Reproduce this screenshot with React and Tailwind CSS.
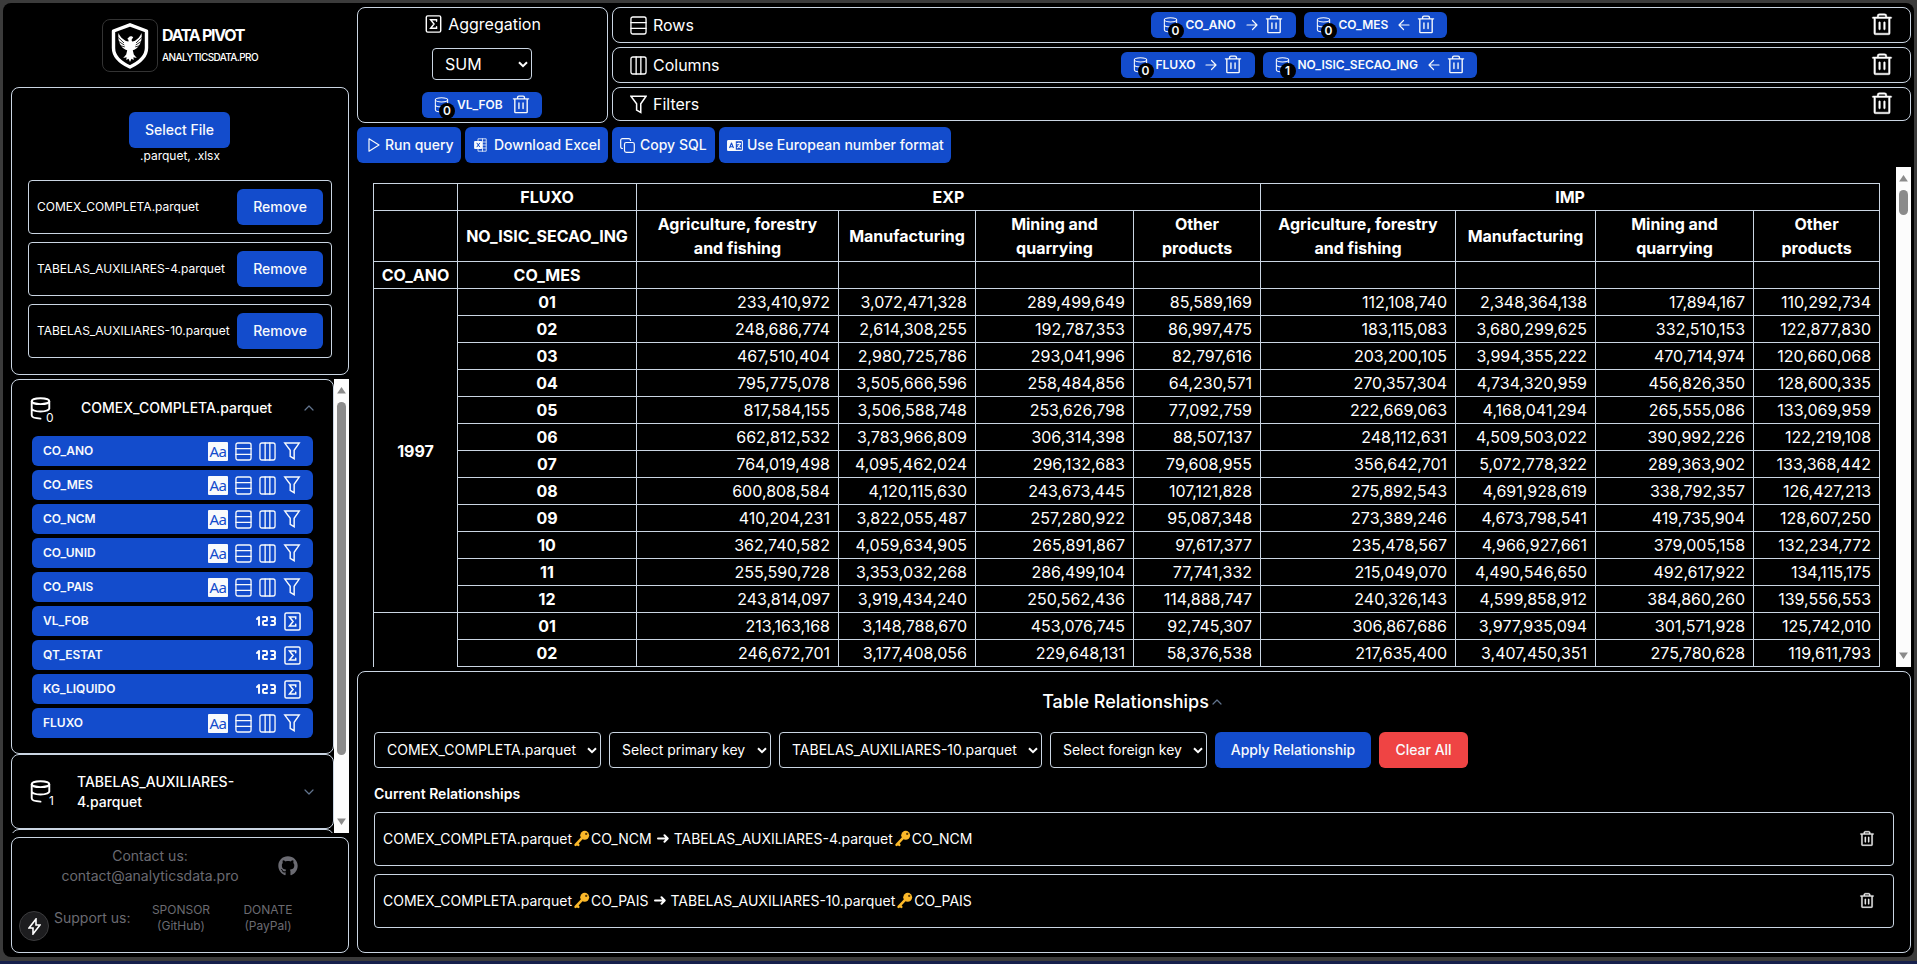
import { PiTrash } from "react-icons/pi";
import { TbNumber123 } from "react-icons/tb";
import { FaGithub } from "react-icons/fa";

const FILES = ["COMEX_COMPLETA.parquet", "TABELAS_AUXILIARES-4.parquet", "TABELAS_AUXILIARES-10.parquet"];

const FIELDS = [
  ["CO_ANO", "text"],
  ["CO_MES", "text"],
  ["CO_NCM", "text"],
  ["CO_UNID", "text"],
  ["CO_PAIS", "text"],
  ["VL_FOB", "number"],
  ["QT_ESTAT", "number"],
  ["KG_LIQUIDO", "number"],
  ["FLUXO", "text"],
];

const SECTIONS = ["Agriculture, forestry and fishing", "Manufacturing", "Mining and quarrying", "Other products"];

const DATA = [
  ["01", "233,410,972", "3,072,471,328", "289,499,649", "85,589,169", "112,108,740", "2,348,364,138", "17,894,167", "110,292,734"],
  ["02", "248,686,774", "2,614,308,255", "192,787,353", "86,997,475", "183,115,083", "3,680,299,625", "332,510,153", "122,877,830"],
  ["03", "467,510,404", "2,980,725,786", "293,041,996", "82,797,616", "203,200,105", "3,994,355,222", "470,714,974", "120,660,068"],
  ["04", "795,775,078", "3,505,666,596", "258,484,856", "64,230,571", "270,357,304", "4,734,320,959", "456,826,350", "128,600,335"],
  ["05", "817,584,155", "3,506,588,748", "253,626,798", "77,092,759", "222,669,063", "4,168,041,294", "265,555,086", "133,069,959"],
  ["06", "662,812,532", "3,783,966,809", "306,314,398", "88,507,137", "248,112,631", "4,509,503,022", "390,992,226", "122,219,108"],
  ["07", "764,019,498", "4,095,462,024", "296,132,683", "79,608,955", "356,642,701", "5,072,778,322", "289,363,902", "133,368,442"],
  ["08", "600,808,584", "4,120,115,630", "243,673,445", "107,121,828", "275,892,543", "4,691,928,619", "338,792,357", "126,427,213"],
  ["09", "410,204,231", "3,822,055,487", "257,280,922", "95,087,348", "273,389,246", "4,673,798,541", "419,735,904", "128,607,250"],
  ["10", "362,740,582", "4,059,634,905", "265,891,867", "97,617,377", "235,478,567", "4,966,927,661", "379,005,158", "132,234,772"],
  ["11", "255,590,728", "3,353,032,268", "286,499,104", "77,741,332", "215,049,070", "4,490,546,650", "492,617,922", "134,115,175"],
  ["12", "243,814,097", "3,919,434,240", "250,562,436", "114,888,747", "240,326,143", "4,599,858,912", "384,860,260", "139,556,553"],
  ["01", "213,163,168", "3,148,788,670", "453,076,745", "92,745,307", "306,867,686", "3,977,935,094", "301,571,928", "125,742,010"],
  ["02", "246,672,701", "3,177,408,056", "229,648,131", "58,376,538", "217,635,400", "3,407,450,351", "275,780,628", "119,611,793"],
];

function Stroke({ children, className, width = 1.5, box = "0 0 20 20" }) {
  return (
    <svg viewBox={box} className={className} fill="none" stroke="currentColor" strokeWidth={width} strokeLinejoin="round" strokeLinecap="round">
      {children}
    </svg>
  );
}

const RowsIcon = ({ className }) => (
  <Stroke className={className} width={1.4} box="0 0 18 20">
    <rect x="1" y="1" width="16" height="18" rx="2" />
    <path d="M1 7h16M1 13h16" />
  </Stroke>
);

const ColumnsIcon = ({ className }) => (
  <Stroke className={className} width={1.4} box="0 0 18 20">
    <rect x="1" y="1" width="16" height="18" rx="2" />
    <path d="M6.500 1v18M11.500 1v18" />
  </Stroke>
);

const FunnelIcon = ({ className }) => (
  <Stroke className={className} width={1.600} box="0 0 18 20">
    <path strokeLinejoin="miter" d="M1 1.200h16l-5.600 8v9.300L7 16V9.200z" />
  </Stroke>
);

const SigmaIcon = ({ className }) => (
  <Stroke className={className} width={1.600} box="0 0 18 20">
    <rect x="1" y="1" width="16" height="18" rx="1.600" />
    <path strokeLinejoin="miter" d="M12.400 7V5.300H5.800L9.600 10l-3.800 4.700h6.600V13" />
  </Stroke>
);

const DatabaseIcon = ({ className, width = 2 }) => (
  <Stroke className={className} width={width} box="0 0 22 24">
    <ellipse cx="11" cy="4.300" rx="9.200" ry="3.100" />
    <path d="M1.800 4.300v14.900c0 1.900 3.700 3.300 9.200 3.400M20.200 4.300v8M1.800 11.800c0 1.900 4 3.300 9.200 3.300s9.200-1.400 9.200-3.300" />
  </Stroke>
);

const LetterIcon = () => (
  <span className="flex h-[19px] w-5 items-center justify-center rounded-[1px] bg-[#f8fafc] font-['Noto_Sans',sans-serif] text-[15px] leading-none tracking-[-0.5px] text-[#134ccc]">Aa</span>
);

const Caret = ({ className = "", up = false }) => (
  <Stroke className={className + " text-slate-500"} width={1.2} box="0 0 10 6">
    <path d={up ? "M1 5l4-4 4 4" : "M1 1l4 4 4-4"} />
  </Stroke>
);

const Arrow = ({ right }) => (
  <Stroke className="h-3 w-3" width={1.2} box="0 0 12 12">
    <path d={right ? "M1 6h10M6.5 1.5 11 6l-4.5 4.5" : "M11 6H1M5.5 1.5 1 6l4.5 4.5"} />
  </Stroke>
);

const KeyIcon = () => (
  <svg viewBox="0 0 16 16" className="mx-[1px] inline-block h-[17px] w-[17px] align-[-3px]">
    <path fill="none" stroke="#fbb829" strokeWidth="2.4" strokeLinecap="round" d="M9 7 2.400 14M3.600 12.600l1.400 1.400" />
    <circle cx="11" cy="5" r="4.200" fill="#fbb829" />
    <circle cx="12.400" cy="3.600" r="1.100" fill="#5b3b05" />
  </svg>
);

function FakeSelect({ label, className }) {
  return (
    <div className={"flex items-center justify-between rounded border border-slate-300 pr-[3px] pl-3 " + className}>
      <span className="whitespace-nowrap">{label}</span>
      <Stroke className="h-[7px] w-[10px] shrink-0" width={2} box="0 0 10 7">
        <path strokeLinecap="butt" strokeLinejoin="miter" d="M1 1.200l4 4 4-4" />
      </Stroke>
    </div>
  );
}

function Chip({ table, label, dir, className }) {
  return (
    <div className={"flex h-[26px] items-center rounded-md bg-[#134ccc] pl-3 text-slate-50 " + className}>
      <div className="relative h-4 w-[23px] shrink-0">
        <DatabaseIcon className="h-4 w-[15px]" width={1.600} />
        <span className="absolute top-[6px] left-[5px] flex h-4 w-4 items-center justify-center rounded-full bg-black text-xs font-semibold">{table}</span>
      </div>
      <span className="text-xs font-semibold">{label}</span>
      {dir && (
        <span className="ml-[10px]">
          <Arrow right={dir === "right"} />
        </span>
      )}
      <PiTrash className={"size-[22px] shrink-0 " + (dir ? "ml-[5px]" : "ml-[7px]")} />
    </div>
  );
}

function DropZone({ icon, label, height, children }) {
  return (
    <div className={"flex items-center rounded-lg border border-slate-300 pl-[17px] pr-[15px] " + height}>
      <div className="flex w-[98px] shrink-0 items-center gap-[6px]">
        {icon}
        <span>{label}</span>
      </div>
      <div className="flex flex-1 justify-center gap-2">{children}</div>
      <PiTrash className="size-[26px]" stroke="currentColor" strokeWidth={4} />
    </div>
  );
}

function ActionButton({ icon, label, className }) {
  return (
    <div className={"flex h-9 items-center rounded-md bg-[#134ccc] text-sm font-medium whitespace-nowrap text-slate-50 " + className}>
      {icon}
      <span>{label}</span>
    </div>
  );
}

function Scrollbar({ thumb }) {
  return (
    <div className="flex w-[15px] shrink-0 flex-col items-center justify-between bg-[#fcfcfc] pt-2 pb-2">
      <div className="flex flex-col items-center gap-2">
        <svg viewBox="0 0 10 8" className="h-[7px] w-[9px] fill-[#8b8b8b]"><path d="M5 0 10 7.500H0z" /></svg>
        <div className={"w-[9px] rounded-full bg-[#8b8b8b] " + thumb} />
      </div>
      <svg viewBox="0 0 10 8" className="h-[7px] w-[9px] fill-[#8b8b8b]"><path d="M5 8 10 .5H0z" /></svg>
    </div>
  );
}

function Logo() {
  return (
    <div className="flex h-[53px] w-[56px] items-center justify-center rounded-lg border border-[#333]">
      <svg viewBox="0 0 40 46" className="h-[46px] w-[40px]">
        <path d="M20 1.800 36.500 8v17c0 7-6 14-16.500 19C9 39 3.500 32 3.500 25V8z" fill="#000" stroke="#fff" strokeWidth="3.400" strokeLinejoin="round" />
        <path
          fill="#fff"
          d="M18.500 18.500c.2-1.500-.2-2.300-1.300-2.600l1.400-1.500c1.300-1.500 3.600-1.400 4.600.2l-1.200 1.300c-.5.700-.4 1.700.2 2.600 4-.4 7.300-3.800 9.300-8.500.9 6.500-1 12.500-5.500 15.800-1.200.9-2.300 1.300-3.200 1.500l1 4.200 3 3.600-3.400-.9.300 2.800-2.200-1.300-1.500 3.300-1.500-3.300-2.200 1.300.3-2.800-3.400.9 3-3.600 1-4.200c-.9-.2-2-.6-3.200-1.500C9.500 22.500 7.600 16.500 8.500 10c2 4.700 6 8.100 10 8.500z"
        />
        <path stroke="#000" strokeWidth=".8" fill="none" d="m8.200 14.500 5.800 5.500M8.700 18.500l5.600 3.500M10.300 22.700l4.500 1.200M31.800 14.500 26 20M31.300 18.500 25.700 22M29.700 22.700l-4.500 1.200" />
      </svg>
    </div>
  );
}

function Sidebar() {
  return (
    <aside className="flex w-[338px] shrink-0 flex-col gap-1">
      <div className="flex h-[76px] items-center gap-1 pt-[1px] pl-[91px]">
        <Logo />
        <div>
          <div className="text-base leading-5 font-bold tracking-[-1.3px]">DATA PIVOT</div>
          <div className="mt-0.5 text-[10px] leading-5 font-medium tracking-[-0.62px]">ANALYTICSDATA.PRO</div>
        </div>
      </div>

      <section className="flex h-72 flex-col items-center rounded-lg border border-slate-300 px-4 pt-6">
        <div className="mr-[1px] flex h-9 w-[101px] shrink-0 items-center justify-center rounded-md bg-[#134ccc] text-sm font-medium text-slate-50">Select File</div>
        <div className="text-xs">.parquet, .xlsx</div>
        <div className="mt-4 flex w-full flex-col gap-2">
          {FILES.map((f) => (
            <div key={f} className="flex h-[54px] items-center justify-between rounded border border-slate-300 px-2">
              <span className="text-xs whitespace-nowrap">{f}</span>
              <div className="flex h-9 w-[86px] shrink-0 items-center justify-center rounded-md bg-[#134ccc] text-sm font-medium text-slate-50">Remove</div>
            </div>
          ))}
        </div>
      </section>

      <div className="flex h-[454px] overflow-hidden">
        <div className="flex flex-1 flex-col">
          <section className="h-[375px] shrink-0 rounded-lg border border-slate-300 px-5">
            <div className="flex h-14 items-center">
              <div className="relative ml-[-2px] w-[51px]">
                <DatabaseIcon className="h-[23px] w-[21px]" />
                <span className="absolute top-[13px] left-[16px] text-xs leading-4">0</span>
              </div>
              <span className="text-sm font-medium">COMEX_COMPLETA.parquet</span>
              <Caret up className="mr-[-1px] ml-auto h-[6px] w-[10px]" />
            </div>
            <div className="flex flex-col gap-1">
              {FIELDS.map(([name, kind]) => (
                <div key={name} className="flex h-[30px] items-center justify-between rounded-md bg-[#134ccc] pr-3 pl-[11px] text-slate-50">
                  <span className="text-xs font-semibold">{name}</span>
                  {kind === "text" ? (
                    <span className="flex items-center gap-[7px]">
                      <LetterIcon />
                      <RowsIcon className="h-[19px] w-[17px]" />
                      <ColumnsIcon className="h-[19px] w-[17px]" />
                      <FunnelIcon className="h-[18px] w-[18px]" />
                    </span>
                  ) : (
                    <span className="flex items-center gap-[6px]">
                      <TbNumber123 className="size-6" />
                      <SigmaIcon className="h-[19px] w-[17px]" />
                    </span>
                  )}
                </div>
              ))}
            </div>
          </section>
          <section className="flex h-[75px] shrink-0 items-center rounded-lg border border-slate-300 px-5">
            <div className="relative ml-[-2px] w-[47px]">
              <DatabaseIcon className="h-[23px] w-[21px]" />
              <span className="absolute top-[13px] left-[19px] text-xs leading-4">1</span>
            </div>
            <span className="w-[180px] text-sm font-medium">TABELAS_AUXILIARES-4.parquet</span>
            <Caret className="mr-[-1px] ml-auto h-[6px] w-[10px]" />
          </section>
          <section className="h-[75px] shrink-0 rounded-lg border border-slate-300" />
        </div>
        <Scrollbar thumb="h-[353px]" />
      </div>

      <footer className="relative flex h-[116px] flex-col rounded-lg border border-slate-300 text-[#6b6b72]">
        <div className="flex h-[55px] items-center">
          <div className="ml-[38px] w-[200px] text-center text-sm leading-5">
            <div>Contact us:</div>
            <div>contact@analyticsdata.pro</div>
          </div>
          <FaGithub className="ml-[28px] size-5" />
        </div>
        <div className="flex items-center pt-[9px] pl-[42px]">
          <span className="w-[84px] text-sm">Support us:</span>
          <span className="w-[86px] text-center text-xs">SPONSOR<br />(GitHub)</span>
          <span className="w-[88px] text-center text-xs">DONATE<br />(PayPal)</span>
        </div>
        <div className="absolute top-[73px] left-[7px] flex size-[30px] items-center justify-center rounded-full border border-[#3c3c3e] bg-[#1d1d1f] text-white">
          <Stroke className="h-[17px] w-[13px]" width={1.600} box="0 0 13 17">
            <path strokeLinejoin="miter" d="M8 1v6h4L5 16v-6H1z" />
          </Stroke>
        </div>
      </footer>
    </aside>
  );
}

function PivotTable() {
  const cell = "border border-slate-300";
  return (
    <div className="flex h-[500px] overflow-hidden">
      <div className="flex-1 overflow-hidden p-4">
        <table className="w-[1506px] table-fixed border-collapse text-base">
          <colgroup>
            <col className="w-[84px]" />
            <col className="w-[179px]" />
            <col className="w-[202px]" />
            <col className="w-[137px]" />
            <col className="w-[158px]" />
            <col className="w-[127px]" />
            <col className="w-[195px]" />
            <col className="w-[140px]" />
            <col className="w-[158px]" />
            <col className="w-[126px]" />
          </colgroup>
          <thead>
            <tr className="h-[27px]">
              <th className={cell} />
              <th className={cell + " font-bold"}>FLUXO</th>
              <th className={cell + " font-bold"} colSpan={4}>EXP</th>
              <th className={cell + " font-bold"} colSpan={4}>IMP</th>
            </tr>
            <tr className="h-[51px]">
              <th className={cell} />
              <th className={cell + " font-bold"}>NO_ISIC_SECAO_ING</th>
              {[...SECTIONS, ...SECTIONS].map((s, i) => (
                <th key={i} className={cell + " px-2 font-bold"}>{s}</th>
              ))}
            </tr>
            <tr className="h-[27px]">
              <th className={cell + " font-bold"}>CO_ANO</th>
              <th className={cell + " font-bold"}>CO_MES</th>
              {[...SECTIONS, ...SECTIONS].map((s, i) => (
                <th key={i} className={cell} />
              ))}
            </tr>
          </thead>
          <tbody>
            {DATA.map(([month, ...values], i) => (
              <tr key={i} className="h-[27px]">
                {i === 0 && <th rowSpan={12} className={cell + " font-bold"}>1997</th>}
                {i === 12 && <th rowSpan={3} className={cell} />}
                <th className={cell + " font-bold"}>{month}</th>
                {values.map((v, j) => (
                  <td key={j} className={cell + " pr-2 text-right"}>{v}</td>
                ))}
              </tr>
            ))}
            <tr className="h-[27px]">
              {[0, 1, 2, 3, 4, 5, 6, 7, 8].map((n) => (
                <td key={n} className={cell} />
              ))}
            </tr>
          </tbody>
        </table>
      </div>
      <Scrollbar thumb="h-[25px]" />
    </div>
  );
}

function Relationship({ left, leftKey, right, rightKey }) {
  return (
    <div className="flex h-[54px] items-center justify-between rounded border border-slate-300 pr-[17px] pl-2 text-sm">
      <span>
        {left}<KeyIcon />{leftKey}
        <Stroke className="mx-[5px] inline-block h-[9px] w-3 align-[1px]" width={2} box="0 0 12 9">
          <path d="M1 4.500h9.500M7.500 1.300 10.700 4.500 7.500 7.700" />
        </Stroke>
        {right}<KeyIcon />{rightKey}
      </span>
      <PiTrash className="size-[18px]" stroke="currentColor" strokeWidth={4} />
    </div>
  );
}

export default function App() {
  return (
    <div className="flex h-[964px] w-[1917px] flex-col overflow-hidden bg-[#3b3b3b] font-['Inter',sans-serif] text-white">
      <div className="mx-[3px] mt-[3px] flex h-[954px] shrink-0 gap-2 rounded-lg bg-black pt-1 pl-2">
        <Sidebar />
        <main className="flex w-[1554px] shrink-0 flex-col gap-1">
          <div className="flex h-[116px] gap-1">
            <section className="flex w-[251px] shrink-0 flex-col items-center rounded-lg border border-slate-300 pr-[1px]">
              <div className="mt-1 flex h-6 items-center gap-[6px] pl-[2px]">
                <SigmaIcon className="h-[18px] w-[17px]" />
                <span>Aggregation</span>
              </div>
              <FakeSelect label="SUM" className="mt-3 h-8 w-[100px] shrink-0" />
              <Chip table="0" label="VL_FOB" className="mt-3 w-[120px] shrink-0" />
            </section>
            <div className="flex flex-1 flex-col gap-1">
              <DropZone icon={<RowsIcon className="h-[19px] w-[17px]" />} label="Rows" height="h-9">
                <Chip table="0" label="CO_ANO" dir="right" className="w-[145px]" />
                <Chip table="0" label="CO_MES" dir="left" className="w-[143px]" />
              </DropZone>
              <DropZone icon={<ColumnsIcon className="h-[19px] w-[17px]" />} label="Columns" height="h-9">
                <Chip table="0" label="FLUXO" dir="right" className="w-[134px]" />
                <Chip table="1" label="NO_ISIC_SECAO_ING" dir="left" className="w-[214px]" />
              </DropZone>
              <DropZone icon={<FunnelIcon className="h-[19px] w-[17px]" />} label="Filters" height="h-[34px]" />
            </div>
          </div>

          <div className="flex h-9 shrink-0 gap-1">
            <ActionButton
              className="w-[104px] gap-[5px] pl-[11px]"
              label="Run query"
              icon={<Stroke className="h-[14px] w-3" width={1.200} box="0 0 12 14"><path d="M1 .8 11 7 1 13.200z" /></Stroke>}
            />
            <ActionButton
              className="w-[143px] gap-[7px] pl-[9px]"
              label="Download Excel"
              icon={
                <Stroke className="h-[14px] w-[13px]" width={1} box="0 0 13 14">
                  <path strokeOpacity=".8" d="M4 3V.8h8.200v12.400H4V11M8.500.8v12.400M8 4h4M8 7h4M8 10h4" />
                  <path fill="currentColor" d="M1 3.500h6.500v7H1z" />
                  <path stroke="#134ccc" d="M3 5.200l2.600 3.600M5.600 5.200 3 8.800" />
                </Stroke>
              }
            />
            <ActionButton
              className="w-[103px] gap-[5px] pl-2"
              label="Copy SQL"
              icon={
                <Stroke className="h-[15px] w-[15px]" width={1.200} box="0 0 15 15">
                  <rect x="4.500" y="4.500" width="9.800" height="9.800" rx="1.800" />
                  <path d="M2.500 10.500C1.300 10.500.7 9.800.7 8.800V2.500C.7 1.300 1.300.7 2.500.7h6.300c1 0 1.700.6 1.700 1.800" />
                </Stroke>
              }
            />
            <ActionButton
              className="w-[232px] gap-1 pl-2"
              label="Use European number format"
              icon={
                <Stroke className="h-[11px] w-4" width={1.100} box="0 0 16 11">
                  <rect x=".6" y=".6" width="14.800" height="9.800" rx="1" />
                  <path fill="currentColor" d="M1 .8h7.200v9.400H1z" />
                  <path stroke="#134ccc" strokeLinecap="butt" d="M2.500 8 4.500 3l2 5M3.200 6.700h2.600" />
                  <path strokeLinecap="butt" d="M9.700 3.600h4.300M11.900 2.500v1M13.300 3.800c-.5 2-1.700 3.400-3.300 4.200M10.800 5.200c.6 1.200 1.700 2.200 3 2.800" />
                </Stroke>
              }
            />
          </div>

          <PivotTable />

          <section className="h-[282px] rounded-lg border border-slate-300 px-4">
            <div className="mt-4 mr-1 flex h-7 items-center justify-center gap-[3px]">
              <span className="text-lg font-medium">Table Relationships</span>
              <Caret up className="h-[6px] w-[10px]" />
            </div>
            <div className="mt-4 flex h-9 gap-2 text-sm">
              <FakeSelect label="COMEX_COMPLETA.parquet" className="w-[227px]" />
              <FakeSelect label="Select primary key" className="w-[162px]" />
              <FakeSelect label="TABELAS_AUXILIARES-10.parquet" className="w-[263px]" />
              <FakeSelect label="Select foreign key" className="w-[157px]" />
              <div className="flex w-[156px] items-center justify-center rounded-md bg-[#134ccc] font-medium text-slate-50">Apply Relationship</div>
              <div className="flex w-[89px] items-center justify-center rounded-md bg-[#ef4444] font-medium text-slate-50">Clear All</div>
            </div>
            <h3 className="mt-4 mb-2 text-sm font-semibold">Current Relationships</h3>
            <div className="flex flex-col gap-2">
              <Relationship left="COMEX_COMPLETA.parquet" leftKey="CO_NCM" right="TABELAS_AUXILIARES-4.parquet" rightKey="CO_NCM" />
              <Relationship left="COMEX_COMPLETA.parquet" leftKey="CO_PAIS" right="TABELAS_AUXILIARES-10.parquet" rightKey="CO_PAIS" />
            </div>
          </section>
        </main>
      </div>
      <div className="mt-1 h-[3px] bg-[#17204c]" />
    </div>
  );
}
